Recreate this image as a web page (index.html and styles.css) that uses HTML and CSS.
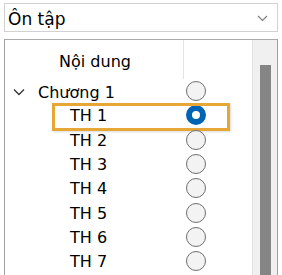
FILE: index.html
```html
<!DOCTYPE html>
<html>
<head>
<meta charset="utf-8">
<link rel="stylesheet" href="styles.css">
</head>
<body>
<div class="wrap">
  <div class="combo">
    <span class="combo-text">Ôn tập</span>
    <svg class="combo-chev" width="11" height="7" viewBox="0 0 11 7"><path d="M1 1 L5.5 5.5 L10 1" fill="none" stroke="#7a7a7a" stroke-width="1.1"/></svg>
  </div>
  <div class="tree">
    <div class="content">
      <div class="header">
        <div class="hcell">Nội dung</div>
        <div class="hcell2"></div>
      </div>
      <div class="row">
        <div class="label chapter">
          <svg class="tchev" width="12" height="8" viewBox="0 0 12 8"><path d="M1 1.5 L6 6.5 L11 1.5" fill="none" stroke="#333" stroke-width="1.3"/></svg>
          <span>Chương 1</span>
        </div>
        <div class="rcell"><span class="radio"></span></div>
      </div>
      <div class="row sel">
        <div class="label item">TH 1</div>
        <div class="rcell"><span class="radio on"></span></div>
        <div class="hl"></div>
      </div>
      <div class="row"><div class="label item">TH 2</div><div class="rcell"><span class="radio"></span></div></div>
      <div class="row"><div class="label item">TH 3</div><div class="rcell"><span class="radio"></span></div></div>
      <div class="row"><div class="label item">TH 4</div><div class="rcell"><span class="radio"></span></div></div>
      <div class="row"><div class="label item">TH 5</div><div class="rcell"><span class="radio"></span></div></div>
      <div class="row"><div class="label item">TH 6</div><div class="rcell"><span class="radio"></span></div></div>
      <div class="row"><div class="label item">TH 7</div><div class="rcell"><span class="radio"></span></div></div>
    </div>
    <div class="scroll"><div class="thumb"></div></div>
  </div>
</div>
</body>
</html>
```
FILE: styles.css
```css
html, body { margin: 0; padding: 0; background: #fff; }
body { font-family: "DejaVu Sans", "Liberation Sans", sans-serif; color: #000; }
.wrap {
  box-sizing: border-box;
  height: 275px;
  padding: 3px 4px 0 4px;
  display: flex;
  flex-direction: column;
  overflow: hidden;
}
.combo {
  box-sizing: border-box;
  height: 29px;
  border: 1px solid #d2d2d2;
  display: flex;
  align-items: center;
  justify-content: space-between;
  padding: 3px 9px 0 3px;
  font-size: 17px;
}
.combo-chev { margin-top: -2px; }
.tree {
  margin-top: 7px;
  flex: 1;
  display: flex;
  border-top: 1px solid #a9a9a9;
  border-left: 1px solid #a0a0a0;
  border-right: 1px solid #9c9cb8;
  overflow: hidden;
  font-size: 16px;
}
.content { flex: 1; }
.header {
  height: 39px;
  display: grid;
  grid-template-columns: 179px 1fr;
}
.hcell {
  border-right: 1px solid #e3e3e3;
  display: flex;
  align-items: center;
  justify-content: center;
  padding-top: 4px;
  padding-left: 2px;
}
.row {
  position: relative;
  height: 24.3px;
  display: grid;
  grid-template-columns: 180px 1fr;
  align-items: center;
}
.label { display: flex; align-items: center; }
.chapter { padding-left: 8px; padding-top: 3px; }
.tchev { margin-right: 13px; margin-top: -2px; }
.item { padding-left: 65px; padding-top: 1px; }
.rcell { display: flex; align-items: center; padding-left: 1px; }
.radio {
  box-sizing: border-box;
  width: 20px;
  height: 20px;
  border-radius: 50%;
  border: 1px solid #6f6f6f;
  background: #f3f3f3;
}
.radio.on {
  border: 6.5px solid #0064b4;
  background: #fff;
}
.hl {
  position: absolute;
  left: 47px;
  top: 0;
  width: 178px;
  height: 28px;
  box-sizing: border-box;
  border: 3px solid #e6a736;
  box-shadow: 1px 1px 2px rgba(0,0,0,0.15);
}
.scroll {
  background: #f0f0f0;
  border-left: 1px solid #e3e3e3;
  padding: 25px 0 0 7px;
  box-sizing: border-box;
  width: 25px;
  display: flex;
}
.thumb { width: 11px; background: #858585; }
```
